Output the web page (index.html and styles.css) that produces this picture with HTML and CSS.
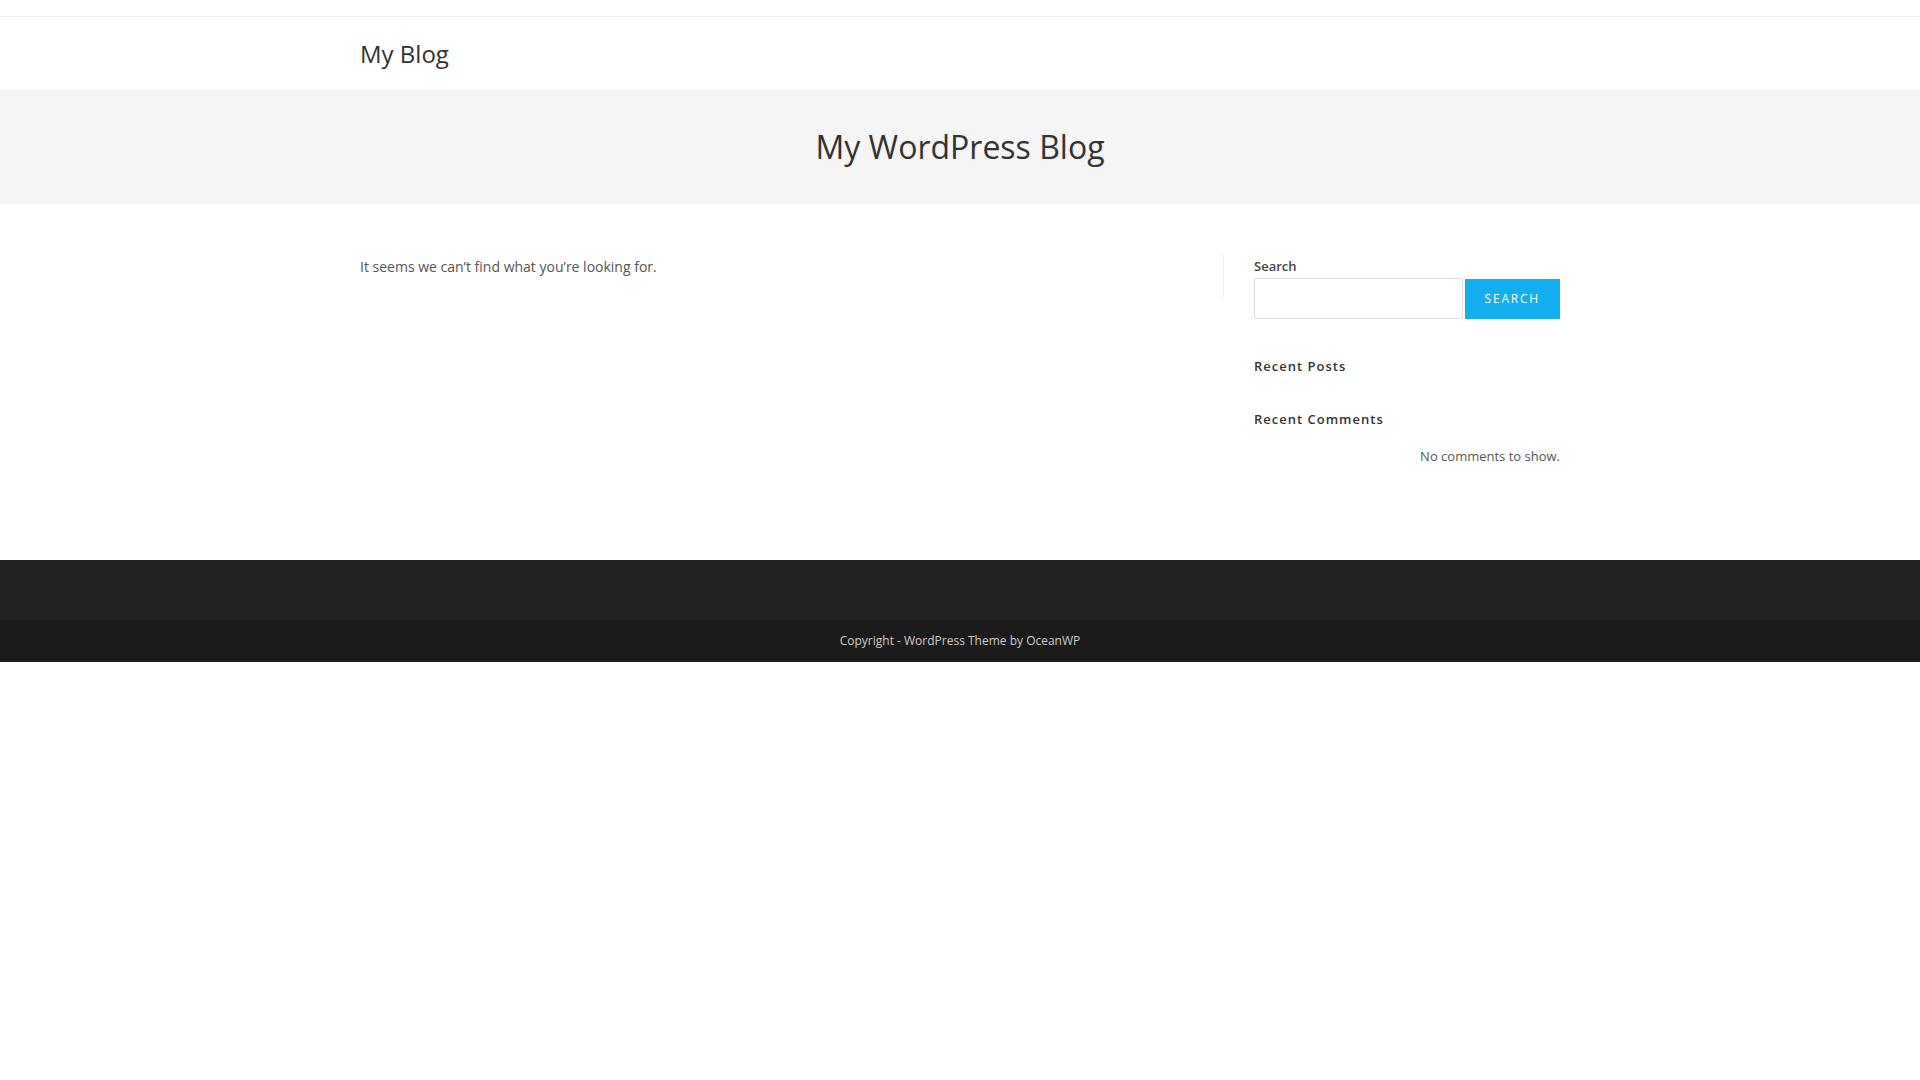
FILE: index.html
```html
<!DOCTYPE html>
<html lang="en">
<head>
  <meta charset="UTF-8">
  <meta name="viewport" content="width=device-width, initial-scale=1.0">
  <title>My Blog</title>
<link rel="stylesheet" href="styles.css">
</head>
<body>
  <!-- top bar (empty) -->
  <div class="topbar"></div>

  <!-- header -->
  <header class="site-header">
    <div class="container header-inner">
      <a class="logo" href="#">My Blog</a>
    </div>
  </header>

  <!-- page title -->
  <div class="page-header">
    <h1 class="page-title">My WordPress Blog</h1>
  </div>

  <div class="container main">
    <div class="content-area">
      <p>It seems we can&rsquo;t find what you&rsquo;re looking for.</p>
    </div>

    <aside class="sidebar">
      <div class="widget search-widget">
        <label class="search-label" for="s">Search</label>
        <div class="search-row">
          <input type="text" id="s" class="search-input">
          <button class="search-btn">Search</button>
        </div>
      </div>
      <div class="widget">
        <h2 class="widget-title">Recent Posts</h2>
      </div>
      <div class="widget last">
        <h2 class="widget-title">Recent Comments</h2>
        <p class="no-comments">No comments to show.</p>
      </div>
    </aside>
  </div>

  <footer>
    <div class="footer-widgets"></div>
    <div class="footer-bottom">
      <p class="copyright">Copyright - WordPress Theme by OceanWP</p>
    </div>
  </footer>
</body>
</html>
```

FILE: styles.css
```css
*{margin: 0;padding: 0;box-sizing: border-box;}
body{
  font-family: "Open Sans", "Liberation Sans", sans-serif;
  font-size: 13px;
  line-height: 1.8;
  color: #555;
  background: #fff;
}
.container{
  width: 1200px;
  margin: 0 auto;
}
.topbar{
  height: 17px;
  border-bottom: 1px solid #f1f1f1;
}
.site-header{
  height: 74px;
  border-bottom: 1px solid #f1f1f1;
}
.header-inner{
  height: 100%;
  display: flex;
  align-items: center;
}
.logo{
  font-size: 24px;
  line-height: 1;
  color: #333;
  text-decoration: none;
}
.page-header{
  background: #f5f5f5;
  padding: 34px 0;
  text-align: center;
}
.page-title{
  font-size: 32px;
  line-height: 1.4;
  font-weight: 400;
  color: #333;
}
.main{
  display: flex;
  align-items: flex-start;
  padding: 50px 0;
}
.content-area{
  width: 72%;
  padding-right: 30px;
  border-right: 1px solid #f1f1f1;
}
.content-area p{
  font-size: 14px;
  margin-bottom: 20px;
}
.sidebar{
  width: 28%;
  padding-left: 30px;
}
.widget{
  margin-bottom: 30px;
}
.widget.last{
  margin-bottom: 42px;
}
.search-widget{
  margin-bottom: 36px;
}
.search-label{
  display: block;
  font-weight: 600;
  color: #444;
  height: 24px;
  line-height: 25px;
}
.search-row{
  display: flex;
  gap: 2px;
}
.search-input{
  flex: 1;
  height: 41px;
  border: 1px solid #ddd;
  border-radius: 3px;
  outline: none;
  padding: 6px 12px;
  font-family: inherit;
}
.search-btn{
  height: 40px;
  margin-top: 1px;
  padding: 0 20px;
  border: none;
  background: #13aff0;
  color: #fff;
  font-family: inherit;
  font-size: 12px;
  font-weight: 400;
  letter-spacing: 0.15em;
  text-transform: uppercase;
}
.widget-title{
  font-size: 13px;
  line-height: 23px;
  font-weight: 600;
  letter-spacing: 1px;
  color: #333;
}
.no-comments{
  margin-top: 14px;
  line-height: 23px;
  text-align: right;
}
.footer-widgets{
  background: #222;
  height: 60px;
}
.footer-bottom{
  background: #1b1b1b;
  padding: 15px 0;
  text-align: center;
}
.copyright{
  font-size: 12px;
  line-height: 12px;
  color: #ccc;
}
```
